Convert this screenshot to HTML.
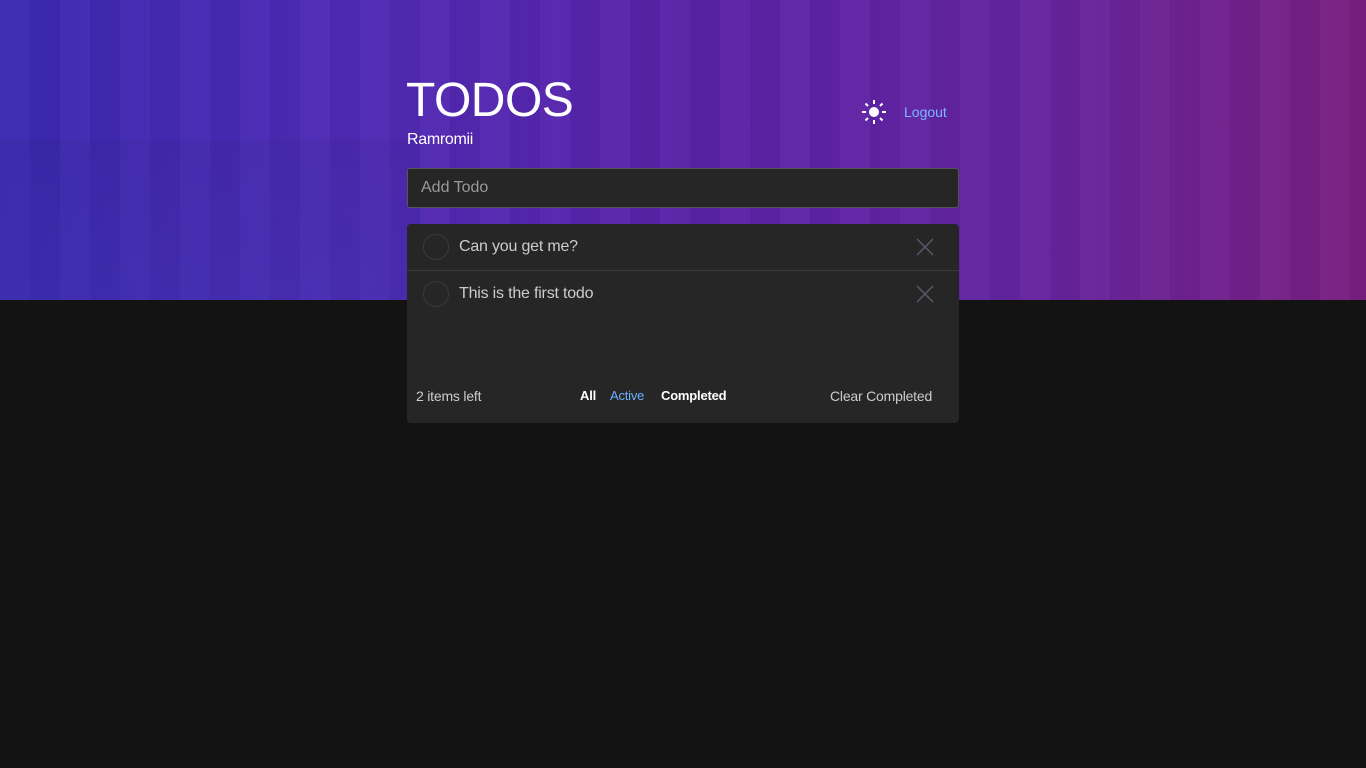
<!DOCTYPE html>
<html><head><meta charset="utf-8"><style>
body{margin:0;width:1366px;height:768px;background:#131313;font-family:"Liberation Sans",Arial,sans-serif;position:relative;overflow:hidden}
.hero{position:absolute;left:0;top:0;width:1366px;height:300px;background:linear-gradient(90deg,#3a28b0 0%,#4e2ab5 25%,#5a22a8 50%,#6424a0 75%,#7a1f80 100%)}
.hero:before{content:"";position:absolute;inset:0;background:repeating-linear-gradient(90deg,rgba(255,255,255,0.025) 0 30px,rgba(0,0,0,0.03) 30px 60px);}
.hero:after{content:"";position:absolute;left:0;top:140px;width:420px;height:160px;background:linear-gradient(180deg,rgba(40,30,120,0.1),rgba(60,50,170,0.35))}
h1{position:absolute;left:406px;top:73px;margin:0;font-weight:normal;font-size:48px;color:#fff;z-index:2;letter-spacing:-0.5px}
.user{position:absolute;left:407px;top:131px;font-size:16px;color:#fff;z-index:2;letter-spacing:-0.3px}
.logout{position:absolute;left:904px;top:104px;font-size:14px;color:#7cb6ff;z-index:2}
.sun{position:absolute;left:860px;top:98px;z-index:2}
.add{position:absolute;left:407px;top:168px;height:38px;background:#262626;border:1px solid #555;border-radius:3px;z-index:2;color:#999;font-size:16px;line-height:38px;padding-left:13px;width:537px}
.list{position:absolute;left:407px;top:224px;width:552px;height:199px;background:#262626;border-radius:4px;z-index:2}
.item{height:46px;position:relative;color:#ccc;font-size:16px;letter-spacing:-0.2px}
.item+.item{border-top:1px solid #3a3a3a}
.circ{position:absolute;left:16px;top:10px;width:24px;height:24px;border:1px solid #3a3a3a;border-radius:50%}
.item span{position:absolute;left:52px;top:14px}
.x{position:absolute;left:509px;top:14px}
.foot{position:absolute;top:164px;left:0;right:0;font-size:14px;color:#ccc;letter-spacing:-0.2px}
</style></head><body>
<div class="hero"></div>
<h1>TODOS</h1>
<div class="user">Ramromii</div>
<svg class="sun" width="28" height="28" viewBox="0 0 28 28" stroke="#fff" stroke-width="2" fill="#fff"><circle cx="14" cy="14" r="5" stroke="none"/><path d="M14 2v4M14 22v4M2 14h4M22 14h4M5.5 5.5l2.5 2.5M20 20l2.5 2.5M5.5 22.5l2.5-2.5M20 8l2.5-2.5"/></svg>
<div class="logout">Logout</div>
<div class="add">Add Todo</div>
<div class="list">
<div class="item"><div class="circ"></div><span>Can you get me?</span><svg class="x" width="18" height="18" stroke="#555a6a" stroke-width="1.5"><path d="M1 1L17 17M17 1L1 17"/></svg></div>
<div class="item"><div class="circ"></div><span>This is the first todo</span><svg class="x" width="18" height="18" stroke="#555a6a" stroke-width="1.5"><path d="M1 1L17 17M17 1L1 17"/></svg></div>
<div class="foot"><span style="position:absolute;left:9px">2 items left</span>
<span style="position:absolute;left:173px;font-weight:bold;font-size:13px;color:#fff">All</span>
<span style="position:absolute;left:203px;font-size:13px;color:#6ab0ff">Active</span>
<span style="position:absolute;left:254px;font-weight:bold;font-size:13px;color:#fff">Completed</span>
<span style="position:absolute;left:423px">Clear Completed</span></div>
</div>
</body></html>
